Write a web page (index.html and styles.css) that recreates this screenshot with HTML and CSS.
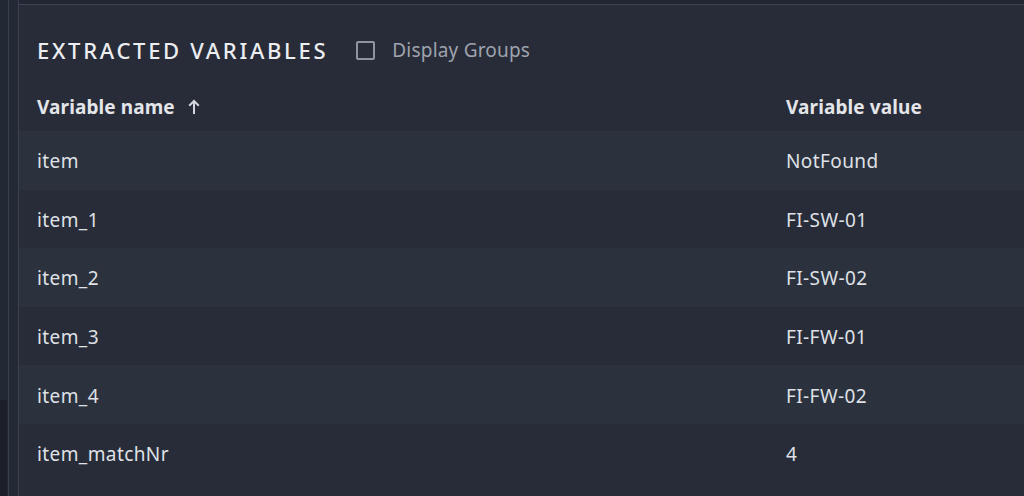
FILE: index.html
```html
<!DOCTYPE html>
<html>
<head>
<meta charset="utf-8">
<link rel="stylesheet" href="styles.css">
</head>
<body>
<div class="app">
  <div class="rail"><div class="rail-shade"></div></div>
  <div class="gutter"></div>
  <div class="main">
    <div class="topbar"></div>
    <div class="panel">
      <div class="title-row">
        <h2 class="title">EXTRACTED VARIABLES</h2>
        <label class="toggle"><span class="box"></span><span class="toggle-label">Display Groups</span></label>
      </div>
      <div class="table">
        <div class="row head">
          <div class="cell">Variable name <svg class="arrow" width="12" height="16" viewBox="0 0 12 16"><path d="M6 15V2M1.2 6.8L6 2l4.8 4.8" fill="none" stroke="#d3d6dc" stroke-width="2"/></svg></div>
          <div class="cell">Variable value</div>
        </div>
        <div class="row alt"><div class="cell">item</div><div class="cell">NotFound</div></div>
        <div class="row"><div class="cell">item_1</div><div class="cell">FI-SW-01</div></div>
        <div class="row alt"><div class="cell">item_2</div><div class="cell">FI-SW-02</div></div>
        <div class="row"><div class="cell">item_3</div><div class="cell">FI-FW-01</div></div>
        <div class="row alt"><div class="cell">item_4</div><div class="cell">FI-FW-02</div></div>
        <div class="row"><div class="cell">item_matchNr</div><div class="cell">4</div></div>
      </div>
    </div>
  </div>
</div>
</body>
</html>
```

FILE: styles.css
```css
* { box-sizing: border-box; }
html, body { margin: 0; padding: 0; }
body {
  width: 1024px;
  height: 496px;
  overflow: hidden;
  background: #232835;
  font-family: "Noto Sans", "Open Sans", sans-serif;
  color: #dfe1e6;
}
.app { display: flex; height: 496px; }
.rail {
  width: 9px;
  background: #232835;
  border-right: 1px solid #394050;
  position: relative;
}
.rail-shade {
  position: absolute;
  left: 0; top: 400px; bottom: 0; width: 7px;
  background: #1c1f28;
  border-top-right-radius: 3px;
}
.gutter {
  width: 10px;
  background: #242936;
  border-right: 1px solid #394050;
}
.main { flex: 1; display: flex; flex-direction: column; }
.topbar {
  height: 5px;
  background: #222633;
  border-bottom: 1px solid #3b4251;
}
.panel { flex: 1; background: #282c39; padding: 0 0 0 18px; }
.title-row {
  display: flex;
  align-items: center;
  height: 78px;
  padding-top: 12px;
}
.title {
  margin: 0;
  font-size: 22px;
  font-weight: 500;
  letter-spacing: 2.7px;
  color: #eceef1;
}
.toggle { display: flex; align-items: center; margin-left: 28px; }
.box {
  width: 19px; height: 19px;
  border: 2px solid #8f949e;
  border-radius: 2px;
}
.toggle-label { margin-left: 17px; font-size: 19px; color: #9ea3ad; letter-spacing: 0.2px; }
.table { margin-left: -18px; }
.row {
  display: grid;
  grid-template-columns: 749px 1fr;
  height: 58.6px;
  align-items: center;
  padding-left: 18px;
  padding-top: 2px;
  font-size: 19px;
  letter-spacing: 0.4px;
}
.row.head { height: 48px; padding-top: 0; font-weight: 700; color: #e3e5e9; letter-spacing: 0.1px; }
.row.alt { background: #2c313e; }
.arrow { margin-left: 8px; vertical-align: -1px; }
```
